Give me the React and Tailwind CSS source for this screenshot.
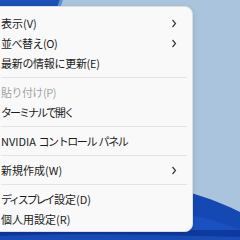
import React from "react";

const Chevron = () => (
  <svg width="6" height="9" viewBox="0 0 6 9" className="block">
    <polyline points="1.5,1 4.5,4.5 1.5,8" fill="none" stroke="#3a3a3a" strokeWidth="1.2" />
  </svg>
);

const Item = ({ children, sub, disabled, track = "" }) => (
  <div className="h-[20px] flex items-center justify-between pr-[15px]">
    <span className={(disabled ? "text-[#a3a3a3] " : "text-[#1b1b1b] ") + track}>{children}</span>
    {sub ? <Chevron /> : null}
  </div>
);

const Sep = () => (
  <div className="h-[9px] flex items-center pr-[5px]">
    <div className="h-px w-full bg-[#e3e3e3]" />
  </div>
);

export default function App() {
  return (
    <div className="relative w-[240px] h-[240px] overflow-hidden bg-[#a9c4dc]">
      <svg className="absolute inset-0" width="240" height="240" viewBox="0 0 240 240">
        <polygon points="0,0 60,0 57,8 0,8" fill="#1c50b8" />
        <polygon points="60,0 63,0 60,8 57,8" fill="#5f8fd3" />
        <path d="M150,185 C190,190 215,200 240,212 L240,240 L150,240 Z" fill="#1449b4" />
        <path d="M170,215 C200,214 220,222 240,230 L240,240 L170,240 Z" fill="#1b57c4" opacity="0.7" />
        <rect x="0" y="230" width="240" height="10" fill="#0e3a9f" />
        <path d="M0,236 C60,233 140,234 240,237 L240,240 L0,240 Z" fill="#1a4cb5" />
      </svg>
      <div
        className="absolute top-[6px] left-[-12px] w-[205px] h-[226px] rounded-[8px] bg-[#f9f9f9] border border-[#dcdcdc] shadow-[0_2px_6px_rgba(0,0,0,0.12)] pl-[12px] pt-[6px] text-[11px] leading-[20px] font-['Noto_Sans_CJK_JP',sans-serif]"
      >
        <Item sub>表示(V)</Item>
        <Item sub track="tracking-[-0.5px]">並べ替え(O)</Item>
        <Item track="tracking-[-0.3px]">最新の情報に更新(E)</Item>
        <Sep />
        <Item disabled track="tracking-[-0.5px]">貼り付け(P)</Item>
        <Item track="tracking-[-2px]">ターミナルで開く</Item>
        <Sep />
        <Item>
          NVIDIA <span className="tracking-[-1.4px]">コントロール</span>{" "}
          <span className="tracking-[-1.4px]">パネル</span>
        </Item>
        <Sep />
        <Item sub>新規作成(W)</Item>
        <Sep />
        <Item>
          <span className="tracking-[-2.2px]">ディスプレイ</span>
          <span className="ml-[1px]">設定(D)</span>
        </Item>
        <Item>個人用設定(R)</Item>
      </div>
    </div>
  );
}
